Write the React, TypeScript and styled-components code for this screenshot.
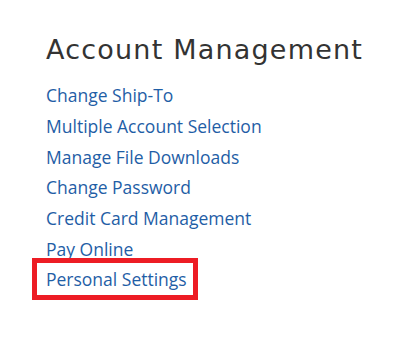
import React from "react";
import styled, { createGlobalStyle } from "styled-components";

const Global = createGlobalStyle`
  html, body { margin: 0; padding: 0; background: #ffffff; }
  body { width: 407px; height: 337px; overflow: hidden; }
`;

const Page = styled.div`
  padding: 30px 0 0 46px;
  display: flex;
  flex-direction: column;
`;

const Heading = styled.h2`
  margin: 0 0 10px 0;
  font-family: "DejaVu Sans", sans-serif;
  font-weight: 400;
  font-size: 27px;
  line-height: 40px;
  color: #333333;
  letter-spacing: 1.2px;
`;

const LinkList = styled.ul`
  list-style: none;
  margin: 0;
  padding: 0;
  display: flex;
  flex-direction: column;
`;

const Item = styled.li`
  display: flex;
  height: 30.7px;
  align-items: center;
`;

const Link = styled.a<{ $highlight?: boolean }>`
  font-family: "Open Sans", sans-serif;
  font-size: 17.5px;
  color: #1f5ea6;
  text-decoration: none;
  position: relative;
  ${(p) =>
    p.$highlight &&
    `
    &::after {
      content: "";
      position: absolute;
      left: -14px;
      right: -11px;
      top: -9px;
      bottom: -9px;
      border: 5px solid #ed1c24;
    }
  `}
`;

const links = [
  "Change Ship-To",
  "Multiple Account Selection",
  "Manage File Downloads",
  "Change Password",
  "Credit Card Management",
  "Pay Online",
  "Personal Settings",
];

export default function App() {
  return (
    <>
      <Global />
      <Page>
        <Heading>Account Management</Heading>
        <LinkList>
          {links.map((l, i) => (
            <Item key={l}>
              <Link href="#" $highlight={i === links.length - 1}>
                {l}
              </Link>
            </Item>
          ))}
        </LinkList>
      </Page>
    </>
  );
}
